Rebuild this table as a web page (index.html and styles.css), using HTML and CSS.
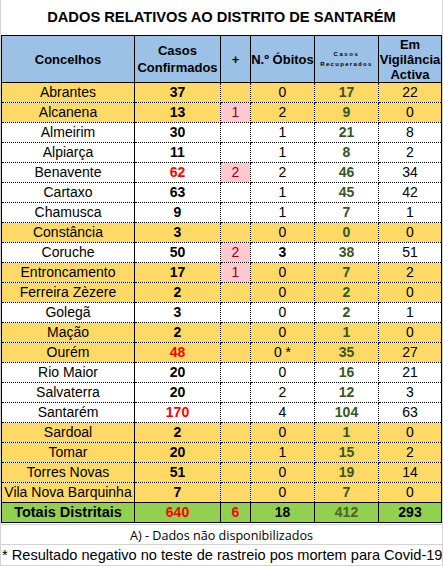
FILE: index.html
```html
<!DOCTYPE html>
<html lang="pt">
<head>
<meta charset="utf-8">
<title>Dados relativos ao distrito de Santarém</title>
<link rel="stylesheet" href="styles.css">
</head>
<body>
<div class="sheet">
  <h1 class="title">DADOS RELATIVOS AO DISTRITO DE SANTARÉM</h1>
  <table class="data">
    <colgroup>
      <col class="c-name"><col class="c-casos"><col class="c-plus"><col class="c-ob"><col class="c-rec"><col class="c-vig">
    </colgroup>
    <thead>
      <tr>
        <th>Concelhos</th>
        <th class="h-casos">Casos<br>Confirmados</th>
        <th>+</th>
        <th>N.º Óbitos</th>
        <th class="h-tiny"><span class="l1">Casos</span><br><span>Recuperados</span></th>
        <th class="h-vig">Em<br>Vigilância<br>Activa</th>
      </tr>
    </thead>
    <tbody>
      <tr class="y"><td>Abrantes</td><td class="cs">37</td><td></td><td>0</td><td class="rc">17</td><td>22</td></tr>
      <tr class="y"><td>Alcanena</td><td class="cs">13</td><td class="pk">1</td><td>2</td><td class="rc">9</td><td>0</td></tr>
      <tr><td>Almeirim</td><td class="cs">30</td><td></td><td>1</td><td class="rc">21</td><td>8</td></tr>
      <tr><td>Alpiarça</td><td class="cs">11</td><td></td><td>1</td><td class="rc">8</td><td>2</td></tr>
      <tr><td>Benavente</td><td class="cs red">62</td><td class="pk">2</td><td>2</td><td class="rc">46</td><td>34</td></tr>
      <tr><td>Cartaxo</td><td class="cs">63</td><td></td><td>1</td><td class="rc">45</td><td>42</td></tr>
      <tr><td>Chamusca</td><td class="cs">9</td><td></td><td>1</td><td class="rc">7</td><td>1</td></tr>
      <tr class="y"><td>Constância</td><td class="cs">3</td><td></td><td>0</td><td class="rc">0</td><td>0</td></tr>
      <tr><td>Coruche</td><td class="cs">50</td><td class="pk">2</td><td class="cs">3</td><td class="rc">38</td><td>51</td></tr>
      <tr class="y"><td>Entroncamento</td><td class="cs">17</td><td class="pk">1</td><td>0</td><td class="rc">7</td><td>2</td></tr>
      <tr class="y"><td>Ferreira Zèzere</td><td class="cs">2</td><td></td><td>0</td><td class="rc">2</td><td>0</td></tr>
      <tr><td>Golegã</td><td class="cs">3</td><td></td><td>0</td><td class="rc">2</td><td>1</td></tr>
      <tr class="y"><td>Mação</td><td class="cs">2</td><td></td><td>0</td><td class="rc">1</td><td>0</td></tr>
      <tr class="y"><td>Ourém</td><td class="cs red">48</td><td></td><td>0 *</td><td class="rc">35</td><td>27</td></tr>
      <tr><td>Rio Maior</td><td class="cs">20</td><td></td><td>0</td><td class="rc">16</td><td>21</td></tr>
      <tr><td>Salvaterra</td><td class="cs">20</td><td></td><td>2</td><td class="rc">12</td><td>3</td></tr>
      <tr><td>Santarém</td><td class="cs red">170</td><td></td><td>4</td><td class="rc">104</td><td>63</td></tr>
      <tr class="y"><td>Sardoal</td><td class="cs">2</td><td></td><td>0</td><td class="rc">1</td><td>0</td></tr>
      <tr class="y"><td>Tomar</td><td class="cs">20</td><td></td><td>1</td><td class="rc">15</td><td>2</td></tr>
      <tr class="y"><td>Torres Novas</td><td class="cs">51</td><td></td><td>0</td><td class="rc">19</td><td>14</td></tr>
      <tr class="y"><td class="tight">Vila Nova Barquinha</td><td class="cs">7</td><td></td><td>0</td><td class="rc">7</td><td>0</td></tr>
    </tbody>
    <tfoot>
      <tr><td class="t-label">Totais Distritais</td><td class="red">640</td><td class="red">6</td><td>18</td><td class="t-rec">412</td><td>293</td></tr>
    </tfoot>
  </table>
  <div class="note note-a">A) - Dados não disponibilizados</div>
  <div class="note note-b">* Resultado negativo no teste de rastreio pos mortem para Covid-19</div>
</div>
</body>
</html>
```

FILE: styles.css
```css
html, body {
  margin: 0;
  padding: 0;
  background: #ffffff;
}

.sheet {
  width: 441px;
  height: 566px;
  border-left: 1px solid #d4d4d4;
  border-right: 1px solid #d4d4d4;
  font-family: "Liberation Sans", Arial, sans-serif;
  color: #000;
  overflow: hidden;
}

.title {
  margin: 0;
  height: 35px;
  line-height: 35px;
  font-size: 14.7px;
  font-weight: bold;
  text-align: center;
  white-space: nowrap;
}

.data {
  width: 440px;
  table-layout: fixed;
  border-collapse: collapse;
  border: 1px solid #000;
}

.c-name { width: 133px; }
.c-casos { width: 86px; }
.c-plus { width: 30px; }
.c-ob { width: 64px; }
.c-rec { width: 64px; }
.c-vig { width: 63px; }

.data th {
  background: #9bc2e6;
  border: 1px solid #000;
  height: 46px;
  padding: 0;
  font-size: 13px;
  font-weight: bold;
  line-height: 15px;
  text-align: center;
  white-space: nowrap;
  vertical-align: middle;
}

.data th.h-casos {
  line-height: 17px;
}

.data th.h-tiny {
  font-size: 6px;
  line-height: 10px;
  letter-spacing: 1.3px;
}

.data th.h-tiny .l1 {
  letter-spacing: 1.6px;
}

.data td {
  height: 19px;
  padding: 0;
  border: 1px dotted #000;
  font-size: 14px;
  line-height: 19px;
  text-align: center;
  white-space: nowrap;
  overflow: hidden;
}

.data td:first-child {
  border-left: 1px solid #000;
  border-right: 1px solid #000;
}

.data td:last-child {
  border-right: 1px solid #000;
}

.data tr.y td {
  background: #ffd966;
}

.data td.tight {
  letter-spacing: 0;
}

.data td.cs {
  font-weight: bold;
}

.data td.rc {
  font-weight: bold;
  color: #375623;
}

.data td.red {
  color: #ff0000;
}

.data tr td.pk {
  background: #ffc7ce;
  color: #9c0006;
}

.data tfoot td {
  background: #92d050;
  border: 1px solid #000;
  font-weight: bold;
  font-size: 14px;
}

.data tfoot td.t-label {
  font-size: 14.5px;
}

.data tfoot td.t-rec {
  color: #4f6228;
}

.note {
  border-bottom: 1px solid #d4d4d4;
  text-align: center;
  white-space: nowrap;
}

.note-a {
  margin-top: 1px;
  border-top: 1px solid #d4d4d4;
  height: 19px;
  line-height: 21px;
  font-family: "Open Sans", "Noto Sans", sans-serif;
  font-size: 12.6px;
}

.note-b {
  height: 20px;
  line-height: 20px;
  font-size: 14.6px;
  text-align: left;
  padding-left: 1px;
}
```
